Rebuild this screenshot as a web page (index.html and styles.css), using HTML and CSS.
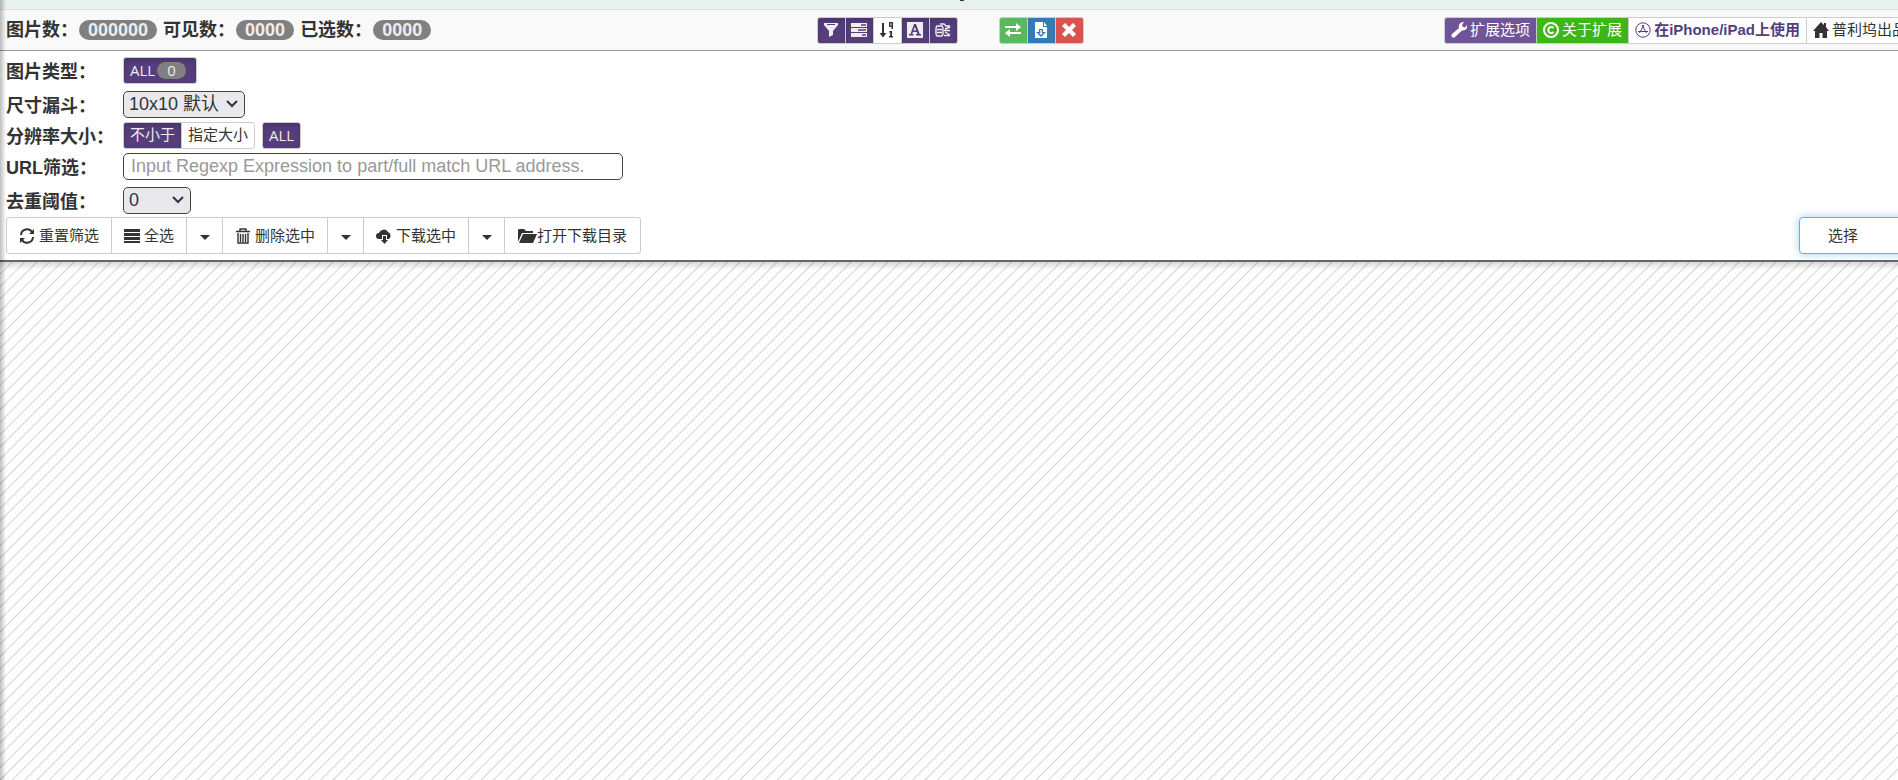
FILE: index.html
```
<!DOCTYPE html>
<html lang="zh-CN">
<head>
  <meta charset="UTF-8" />
  <title>图片列表</title>
  <link rel="stylesheet" href="styles.css">
</head>
<body>
  <div class="notice"></div>

  <header class="topbar">
    <div class="counts">
      <span>图片数：</span><span class="badge">000000</span>
      <span>可见数：</span><span class="badge">0000</span>
      <span>已选数：</span><span class="badge">0000</span>
    </div>
    <div class="tools">
      <div class="btn-group">
        <button class="btn icon-btn purple" aria-label="filter"><svg viewBox="0 0 16 16"><path fill-rule="evenodd" d="M1 1h14v2l-5 6v4l-4 2V9L1 3zM4 2v1h8V2z"/></svg></button>
        <button class="btn icon-btn purple" aria-label="list"><svg viewBox="0 0 16 16"><path d="M0 1h16v4H0zM0 6h16v4H0zM0 11h16v4H0z"/><path d="M10 3h5M7 8h8M11 13h4" stroke="#563d7c" stroke-width="1.500"/></svg></button>
        <button class="btn icon-btn" aria-label="sort"><svg viewBox="0 0 16 16"><path d="M3 1h2v10h2.500L4 15.500.5 11H3zM10 0h4v7h-1.500V5H10zM11.500 1.200v2.500h1V1.200zM10.500 9h2.500v5h1v1.500h-4V14h1.200v-3.500h-1.200z"/></svg></button>
        <button class="btn icon-btn purple" aria-label="text"><svg viewBox="0 0 16 16"><path fill-rule="evenodd" d="M0 0h16v16H0zM7 2L3.500 12H2v1.500h4.500V12H5.300l.7-2h3.700l.7 2H9v1.500h5V12h-1.300L9 2zm.8 2.800L9.200 8.500H6.500z"/></svg></button>
        <button class="btn icon-btn purple" aria-label="link"><svg viewBox="0 0 16 16" class="line bold"><path d="M2 4h5l1 2v6l-1 2H2l-1-2V6zM2 7.500h5M2 10.500h5M5 2h4l2 2h4M10 7l5-2M9 8.500h6M10 10l5 3M9 13.500h6"/></svg></button>
      </div>
      <div class="btn-group">
        <button class="btn icon-btn green" aria-label="invert"><svg viewBox="0 0 16 16"><path d="M0 4h11V1l5 4-5 4V6H0zM16 10v2H5v3l-5-4 5-4v3z"/></svg></button>
        <button class="btn icon-btn blue" aria-label="save"><svg viewBox="0 0 16 16"><path fill-rule="evenodd" d="M2 0h8v5h4v11H2zM11 0l3 4h-3zM6 7v3H3l5 5 5-5h-3V7z"/><path d="M7.300 8h1.400v3H10l-2 2-2-2h1.300z"/></svg></button>
        <button class="btn icon-btn red" aria-label="close"><svg viewBox="0 0 16 16"><path d="M1 4l3-3 4 4 4-4 3 3-4 4 4 4-3 3-4-4-4 4-3-3 4-4z"/></svg></button>
      </div>
    </div>
    <nav class="btn-group links">
      <a class="btn violet" href="#options"><svg viewBox="0 0 16 16"><path d="M1 12l7-6c-1-3 1-6 5-6l-2 3 1 2 2 .5L16 3c1 4-2 6-5 5.500L4 15c-2 2-5-1-3-3z"/></svg>扩展选项</a>
      <a class="btn lime" href="#about"><svg viewBox="0 0 16 16" class="line thick"><circle cx="8" cy="8" r="7"/><path d="M10.500 6a3 3 0 1 0 0 4"/></svg>关于扩展</a>
      <a class="btn mobile" href="#mobile"><svg viewBox="0 0 16 16" class="line"><circle cx="8" cy="8" r="7.200"/><path d="M7 3l4.500 8M9 3l-4.500 8M3 9.500h10"/></svg>在iPhone/iPad上使用</a>
      <a class="btn" href="#home"><svg viewBox="0 0 16 16"><path d="M8 0l3 3V1h2v4l3 4h-2v7H9.500v-5h-3v5H2V9H0z"/></svg>普利坞出品</a>
    </nav>
  </header>

  <main>
    <section class="panel">
      <div class="row">
        <span class="label">图片类型：</span>
        <button class="btn purple type">ALL<span class="badge small">0</span></button>
      </div>
      <div class="row">
        <label class="label" for="size">尺寸漏斗：</label>
        <select id="size" class="size"><option>10x10 默认</option></select>
      </div>
      <div class="row tight">
        <span class="label">分辨率大小：</span>
        <div class="btn-group">
          <button class="btn purple">不小于</button>
          <button class="btn">指定大小</button>
        </div>
        <button class="btn purple all">ALL</button>
      </div>
      <div class="row">
        <label class="label" for="url">URL筛选：</label>
        <input id="url" type="text" placeholder="Input Regexp Expression to part/full match URL address.">
      </div>
      <div class="row">
        <label class="label" for="dedupe">去重阈值：</label>
        <select id="dedupe" class="dedupe"><option>0</option></select>
      </div>
      <div class="actions">
        <div class="btn-group large">
          <button class="btn"><svg viewBox="0 0 16 16" class="line thick"><path d="M2 7a6 6 0 0 1 11-3M14 9a6 6 0 0 1-11 3"/><path class="solid" d="M15 1v5h-5zM1 15v-5h5z"/></svg>重置筛选</button>
          <button class="btn"><svg viewBox="0 0 16 16"><path d="M0 1h16v3H0zM0 5h16v3H0zM0 9h16v3H0zM0 13h16v2H0z"/></svg>全选</button>
          <button class="btn caret" aria-label="more"></button>
          <button class="btn"><svg viewBox="0 0 16 16" class="line bold"><path d="M1 3.500h14M5 3V1h6v2M3 5v10h10V5M5.500 6v8M8 6v8M10.500 6v8"/></svg>删除选中</button>
          <button class="btn caret" aria-label="more"></button>
          <button class="btn"><svg viewBox="0 0 16 16"><path d="M3 11a3 3 0 0 1 0-6 5 5 0 0 1 9-1 4 4 0 0 1 1 7h-2V7H6v4zM7 8h3v4h2l-3.500 4L5 12h2z"/></svg>下载选中</button>
          <button class="btn caret" aria-label="more"></button>
          <button class="btn"><svg viewBox="0 0 19 16" class="folder"><path d="M0 14V2l1-1h5l2 2h7v2H4zM5 6h14l-4 9H1z"/></svg>打开下载目录</button>
        </div>
        <button class="btn choose">选择</button>
      </div>
    </section>
    <div class="canvas"></div>
  </main>
</body>
</html>
```
FILE: styles.css
```
* {
  box-sizing: border-box;
}
body {
  margin: 0;
  min-height: 100vh;
  display: flex;
  flex-direction: column;
  overflow: hidden;
  font-family: "Liberation Sans", "Noto Sans CJK SC", sans-serif;
  color: #333;
  background: #fff;
}
body::before {
  content: "";
  position: fixed;
  top: 0;
  bottom: 0;
  left: 0;
  width: 6px;
  z-index: 2;
  background: linear-gradient(to right, rgba(0, 0, 0, 0.25), transparent);
}
.notice {
  display: flex;
  justify-content: center;
  height: 10px;
  padding-left: 26px;
  background: #e8f1ec;
  border-bottom: 1px solid #cfe3d8;
}
.notice::before {
  content: "";
  width: 4px;
  height: 1px;
  background: #333;
}
.topbar {
  display: grid;
  grid-template-columns: 1fr auto 1fr;
  align-items: center;
  height: 41px;
  padding: 0 4px 0 6px;
  background: #f9f9f9;
  border-bottom: 1px solid #999;
}
.counts {
  display: flex;
  align-items: center;
  font-size: 18px;
  line-height: 20px;
  font-weight: bold;
}
.badge {
  margin: 0 6px 0 1px;
  padding: 0 9px;
  border-radius: 10px;
  line-height: 20px;
  background: #808080;
  color: #eee;
}
.tools {
  display: flex;
  gap: 41px;
}
.btn-group {
  display: flex;
}
.btn {
  display: flex;
  align-items: center;
  justify-content: center;
  height: 27px;
  padding: 0 6px;
  border: 1px solid #ccc;
  border-radius: 3px;
  background: #fff;
  color: #333;
  font: 15px/20px "Liberation Sans", "Noto Sans CJK SC", sans-serif;
  white-space: nowrap;
  text-decoration: none;
  cursor: pointer;
}
.btn-group .btn {
  border-radius: 0;
}
.btn-group .btn + .btn {
  margin-left: -1px;
}
.btn-group .btn:first-child {
  border-radius: 3px 0 0 3px;
}
.btn-group .btn:last-child {
  border-radius: 0 3px 3px 0;
}
.btn svg {
  flex: none;
  width: 16px;
  height: 16px;
  margin-right: 3px;
  fill: currentColor;
}
.btn svg.line {
  fill: none;
  stroke: currentColor;
}
.btn svg.bold {
  stroke-width: 1.4;
}
.btn svg.thick {
  stroke-width: 2;
}
.btn svg .solid {
  fill: currentColor;
  stroke: none;
}
.large .btn svg {
  margin-right: 4px;
}
.large .btn svg.folder {
  width: 19px;
  margin-right: 0;
}
.btn.icon-btn {
  width: 29px;
}
.btn.icon-btn svg {
  margin: 0;
}
.btn.purple {
  background: #563d7c;
  color: #eee;
  box-shadow: inset 0 3px 5px rgba(0, 0, 0, 0.125);
}
.btn.green {
  background: #5cb85c;
  color: #fff;
}
.btn.blue {
  background: #337ab7;
  color: #fff;
}
.btn.red {
  background: #d9534f;
  color: #fff;
}
.btn.violet {
  background: #6f5499;
  color: #fff;
}
.btn.lime {
  background: #3fb618;
  color: #fff;
}
.btn.mobile {
  color: #563d7c;
  font-weight: bold;
}
.links {
  justify-self: end;
  margin-right: -20px;
}
.panel {
  padding: 2px 0 6px 6px;
  border-bottom: 2px solid #666;
}
.row {
  display: flex;
  align-items: center;
  height: 34px;
}
.row.tight {
  height: 28px;
}
.label {
  width: 117px;
  font-size: 18px;
  font-weight: bold;
}
.badge.small {
  margin: 0 4px 0 2px;
  padding: 0 10px;
  line-height: 17px;
}
.btn.type,
.btn.all {
  font-family: "Open Sans", sans-serif;
}
.btn.all {
  margin-left: 7px;
}
select,
input {
  height: 27px;
  border: 1px solid #4a4233;
  border-radius: 5px;
  color: #333;
  font: 18px "Liberation Sans", "Noto Sans CJK SC", sans-serif;
}
select {
  appearance: none;
  padding: 0 5px;
  background: #e9e9ed url("data:image/svg+xml,%3Csvg xmlns='http://www.w3.org/2000/svg' width='12' height='8'%3E%3Cpath d='M1 1l5 5 5-5' fill='none' stroke='%23333' stroke-width='2'/%3E%3C/svg%3E") no-repeat right 6px center;
}
.size {
  width: 122px;
}
.dedupe {
  width: 68px;
}
input {
  width: 500px;
  padding: 0 7px;
}
input::placeholder {
  color: #999;
}
.actions {
  display: flex;
  justify-content: space-between;
}
.large .btn {
  height: 37px;
  padding: 0 12px;
}
.large .btn.caret {
  width: 37px;
}
.caret::before {
  content: "";
  margin-top: 3px;
  border: 5px solid transparent;
  border-top-color: #333;
  border-bottom: 0;
}
.large .btn:last-child {
  padding: 0 13px;
}
.btn.choose {
  justify-content: flex-start;
  width: 111px;
  height: 37px;
  margin-right: -12px;
  padding: 0 28px;
  border-color: #66afe9;
  border-radius: 4px;
  box-shadow: 0 0 8px rgba(102, 175, 233, 0.6);
}
main {
  flex: 1;
  display: flex;
  flex-direction: column;
}
/* six stripes across the diagonal, so the tiles join up */
.canvas {
  flex: 1;
  background-image: linear-gradient(rgba(0, 0, 0, 0.15), transparent 8px),
    repeating-linear-gradient(135deg, #d4d4d4 0, #fff 1px, #fff calc(100% / 6 - 1px), #d4d4d4 calc(100% / 6));
  background-size: auto, 37px 37px;
}
```
